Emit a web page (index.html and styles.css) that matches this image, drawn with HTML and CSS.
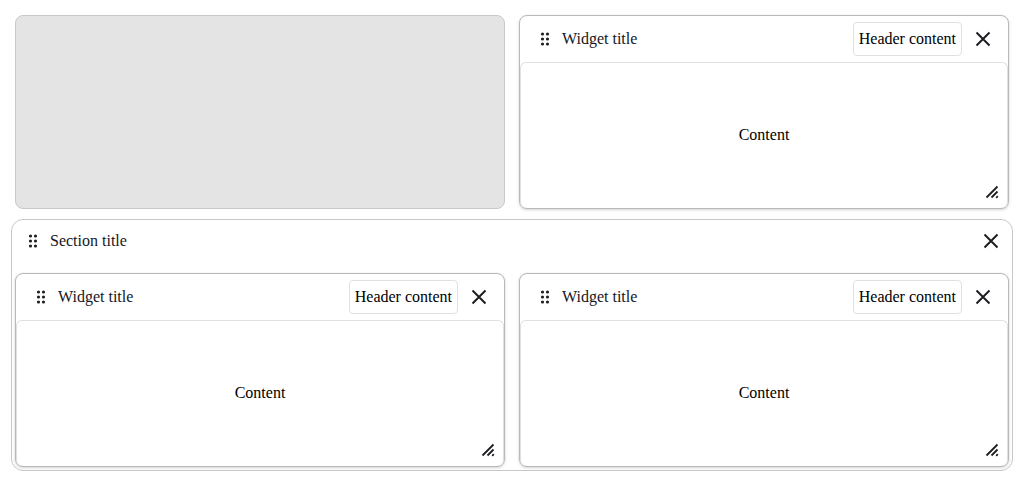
FILE: index.html
```html
<!DOCTYPE html>
<html lang="en">
<head>
<meta charset="utf-8">
<title>Dashboard</title>
<link rel="stylesheet" href="styles.css">
</head>
<body>
<svg class="sprite" aria-hidden="true">
  <symbol id="grip" viewBox="0 0 10 16"><circle cx="2.5" cy="3" r="1.6"/><circle cx="7.5" cy="3" r="1.6"/><circle cx="2.5" cy="8" r="1.6"/><circle cx="7.5" cy="8" r="1.6"/><circle cx="2.5" cy="13" r="1.6"/><circle cx="7.5" cy="13" r="1.6"/></symbol>
  <symbol id="close" viewBox="0 0 16 16"><path d="M1.5 1.5 14.5 14.5M14.5 1.5 1.5 14.5"/></symbol>
  <symbol id="resize" viewBox="0 0 14 14"><path d="M1.5 12.5 12.5 1.5M6.5 12.5 12.5 6.5M11.2 12.8 12.8 11.2"/></symbol>
</svg>
<main class="dashboard">
  <div class="grid">
    <div class="placeholder"></div>
    <article class="widget">
      <header class="widget-header">
        <svg class="grip"><use href="#grip"/></svg>
        <span class="title">Widget title</span>
        <button class="header-content" type="button">Header content</button>
        <button class="close" type="button" aria-label="Close"><svg><use href="#close"/></svg></button>
      </header>
      <div class="widget-body">Content<svg class="resize"><use href="#resize"/></svg></div>
    </article>
  </div>
  <section class="section">
    <header class="section-header">
      <svg class="grip"><use href="#grip"/></svg>
      <span class="title">Section title</span>
      <button class="close" type="button" aria-label="Close"><svg><use href="#close"/></svg></button>
    </header>
    <div class="grid">
      <article class="widget">
        <header class="widget-header">
          <svg class="grip"><use href="#grip"/></svg>
          <span class="title">Widget title</span>
          <button class="header-content" type="button">Header content</button>
          <button class="close" type="button" aria-label="Close"><svg><use href="#close"/></svg></button>
        </header>
        <div class="widget-body">Content<svg class="resize"><use href="#resize"/></svg></div>
      </article>
      <article class="widget">
        <header class="widget-header">
          <svg class="grip"><use href="#grip"/></svg>
          <span class="title">Widget title</span>
          <button class="header-content" type="button">Header content</button>
          <button class="close" type="button" aria-label="Close"><svg><use href="#close"/></svg></button>
        </header>
        <div class="widget-body">Content<svg class="resize"><use href="#resize"/></svg></div>
      </article>
    </div>
  </section>
</main>
</body>
</html>
```

FILE: styles.css
```css
* {
  box-sizing: border-box;
}

body {
  margin: 0;
  background: #fff;
  color: #000;
  font: 16px/18px "Liberation Serif", "Times New Roman", serif;
}

button {
  padding: 0;
  border: 0;
  background: none;
  color: inherit;
  font: inherit;
}

.sprite {
  position: absolute;
  width: 0;
  height: 0;
}

.dashboard {
  display: flex;
  flex-direction: column;
  gap: 10px;
  padding: 15px 11px 11px;
}

.grid {
  display: grid;
  grid-template-columns: 1fr 1fr;
  gap: 14px;
}

.dashboard > .grid {
  padding: 0 4px;
}

.placeholder {
  border: 1px solid #c8c8c8;
  border-radius: 8px;
  background: #e4e4e4;
}

.widget {
  border: 1px solid #b8b8b8;
  border-radius: 8px;
  background: #fff;
  box-shadow: 0 1px 3px rgba(0, 0, 0, 0.18);
}

.widget-header,
.section-header {
  display: flex;
  align-items: center;
}

.widget-header {
  padding: 6px 13px 6px 20px;
}

.section-header {
  padding: 5px 6px 16px 13px;
}

.grip {
  width: 10px;
  height: 16px;
  fill: #1f1f23;
}

.title {
  flex: 1;
  margin-left: 12px;
  color: #16161d;
}

.header-content {
  padding: 7px 5px;
  border: 1px solid #e0e0e0;
  border-radius: 4px;
}

.close {
  display: grid;
  place-items: center;
  width: 24px;
  height: 32px;
  margin-left: 9px;
}

.close svg {
  width: 16px;
  height: 16px;
  fill: none;
  stroke: #1f1f23;
  stroke-width: 2;
}

.widget-body {
  position: relative;
  display: grid;
  place-items: center;
  min-height: 146px;
  padding-bottom: 2px;
  border: 1px solid #e0e0e0;
  border-width: 1px 1px 0;
  border-radius: 6px;
}

.resize {
  position: absolute;
  right: 8px;
  bottom: 9px;
  width: 14px;
  height: 14px;
  fill: none;
  stroke: #1f1f23;
  stroke-width: 1.8;
}

.section {
  padding: 0 3px 3px;
  border: 1px solid #c8c8c8;
  border-radius: 12px;
}
```
